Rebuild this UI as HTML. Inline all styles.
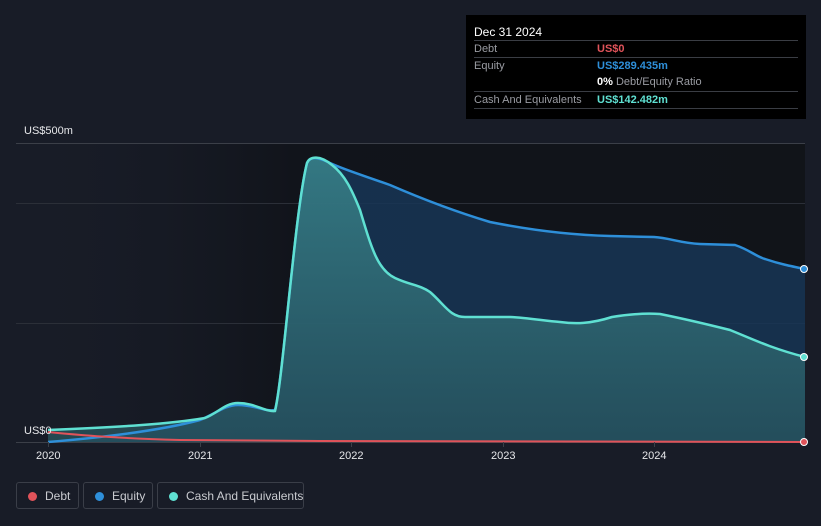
<!DOCTYPE html>
<html><head><style>
html,body{margin:0;width:821px;height:526px;overflow:hidden}
body{background:#181c27;font-family:"Liberation Sans",sans-serif;position:relative}
.tt{position:absolute;left:466px;top:15px;width:340px;height:104px;background:#000;color:#fff;font-size:11px}
.tt .h{position:absolute;left:8px;top:10px;font-size:12px}
.row{position:absolute;left:8px;width:324px;border-top:1px solid #3a3d44;height:16px;line-height:17px;white-space:nowrap}
.row span{position:absolute;left:123px;font-weight:bold}
.lbl{color:#9a9ca3}
.leg{position:absolute;top:482px;height:27px;border:1px solid #3a3e48;border-radius:3px;color:#c9cbd0;font-size:12px;line-height:26px;box-sizing:border-box;white-space:nowrap}
.leg i{position:absolute;left:11px;top:9px;width:9px;height:9px;border-radius:50%}
.ax{position:absolute;color:#e6e7ea;font-size:11px;white-space:nowrap}
</style></head><body>
<svg width="821" height="526" style="position:absolute;left:0;top:0">
<defs>
<linearGradient id="bg" x1="0" x2="1" y1="0" y2="0"><stop offset="0" stop-color="#181c27" stop-opacity="0"/><stop offset="0.35" stop-color="#11141b"/><stop offset="1" stop-color="#111419"/></linearGradient>
<linearGradient id="cf" x1="0" x2="0" y1="0" y2="1"><stop offset="0" stop-color="#3b8a90" stop-opacity="0.8"/><stop offset="1" stop-color="#2a5a62" stop-opacity="0.7"/></linearGradient>
</defs>
<rect x="16" y="143" width="789" height="299" fill="url(#bg)"/>
<line x1="16" y1="143.5" x2="805" y2="143.5" stroke="#3b3f48"/>
<line x1="16" y1="203.5" x2="805" y2="203.5" stroke="#2b2f38"/>
<line x1="16" y1="323.5" x2="805" y2="323.5" stroke="#2b2f38"/>
<line x1="16" y1="442.5" x2="805" y2="442.5" stroke="#3b3f48"/>
<path d="M48,442 C120,436 170,428 200,420 C215,414 225,405 238,405 C255,405 265,412 275,410 C283,380 295,210 307,163 C310,156 318,157 330,163 C345,170 365,176 390,185 C420,198 450,210 490,222 C530,230 570,235 610,236 L654,237 C670,238 680,243 700,244 L735,245 C750,250 755,256 765,259 C780,264 790,266 805,269 L805,442 L48,442Z" fill="#173556" fill-opacity="0.85"/>
<path d="M48,430 C120,427 170,424 205,418 C218,413 225,403 238,403 C255,403 265,412 275,411 C283,380 295,210 307,163 C310,156 320,155 332,165 C345,175 352,190 360,210 C372,250 378,270 395,278 C410,285 420,285 430,292 C445,305 450,317 465,317 L510,317 C530,318 545,321 560,322 C575,324 590,324 612,317 C630,314 645,313 660,314 C690,320 710,325 730,330 C750,338 770,348 805,357 L805,442 L48,442Z" fill="url(#cf)"/>
<path d="M48,442 C120,436 170,428 200,420 C215,414 225,405 238,405 C255,405 265,412 275,410 C283,380 295,210 307,163 C310,156 318,157 330,163 C345,170 365,176 390,185 C420,198 450,210 490,222 C530,230 570,235 610,236 L654,237 C670,238 680,243 700,244 L735,245 C750,250 755,256 765,259 C780,264 790,266 805,269" fill="none" stroke="#2e8fd9" stroke-width="2.5"/>
<path d="M48,430 C120,427 170,424 205,418 C218,413 225,403 238,403 C255,403 265,412 275,411 C283,380 295,210 307,163 C310,156 320,155 332,165 C345,175 352,190 360,210 C372,250 378,270 395,278 C410,285 420,285 430,292 C445,305 450,317 465,317 L510,317 C530,318 545,321 560,322 C575,324 590,324 612,317 C630,314 645,313 660,314 C690,320 710,325 730,330 C750,338 770,348 805,357" fill="none" stroke="#5fe0d2" stroke-width="2.5"/>
<path d="M48,432 C80,435 110,438 180,440 L320,441 L805,442" fill="none" stroke="#e0535a" stroke-width="2"/>
<circle cx="804" cy="269" r="3.5" fill="#2e8fd9" stroke="#fff" stroke-width="1"/>
<circle cx="804" cy="357" r="3.5" fill="#5fe0d2" stroke="#fff" stroke-width="1"/>
<circle cx="804" cy="442" r="3.5" fill="#e0535a" stroke="#fff" stroke-width="1"/>
<g stroke="#3b3f48"><line x1="48.5" y1="442" x2="48.5" y2="447"/><line x1="200.5" y1="442" x2="200.5" y2="447"/><line x1="351.5" y1="442" x2="351.5" y2="447"/><line x1="503.5" y1="442" x2="503.5" y2="447"/><line x1="654.5" y1="442" x2="654.5" y2="447"/></g>
</svg>
<div class="ax" style="left:24px;top:125px">US$500m</div>
<div class="ax" style="left:24px;top:425px">US$0</div>
<div class="ax" style="left:36px;top:450px">2020</div>
<div class="ax" style="left:188px;top:450px">2021</div>
<div class="ax" style="left:339px;top:450px">2022</div>
<div class="ax" style="left:491px;top:450px">2023</div>
<div class="ax" style="left:642px;top:450px">2024</div>
<div class="tt">
<div class="h">Dec 31 2024</div>
<div class="row lbl" style="top:25px">Debt<span style="color:#e0535a">US$0</span></div>
<div class="row lbl" style="top:42px">Equity<span style="color:#2e8fd9">US$289.435m</span></div>
<div class="row lbl" style="top:59px;border:0"><span style="color:#fff;font-weight:bold">0%<b style="font-weight:normal;color:#9a9ca3"> Debt/Equity Ratio</b></span></div>
<div class="row lbl" style="top:76px">Cash And Equivalents<span style="color:#5fe0d2">US$142.482m</span></div>
<div class="row" style="top:93px;height:0"></div>
</div>
<div class="leg" style="left:16px;width:63px"><i style="background:#e0535a"></i><span style="margin-left:28px">Debt</span></div>
<div class="leg" style="left:83px;width:70px"><i style="background:#2e8fd9"></i><span style="margin-left:28px">Equity</span></div>
<div class="leg" style="left:157px;width:147px"><i style="background:#5fe0d2"></i><span style="margin-left:28px">Cash And Equivalents</span></div>
</body></html>
